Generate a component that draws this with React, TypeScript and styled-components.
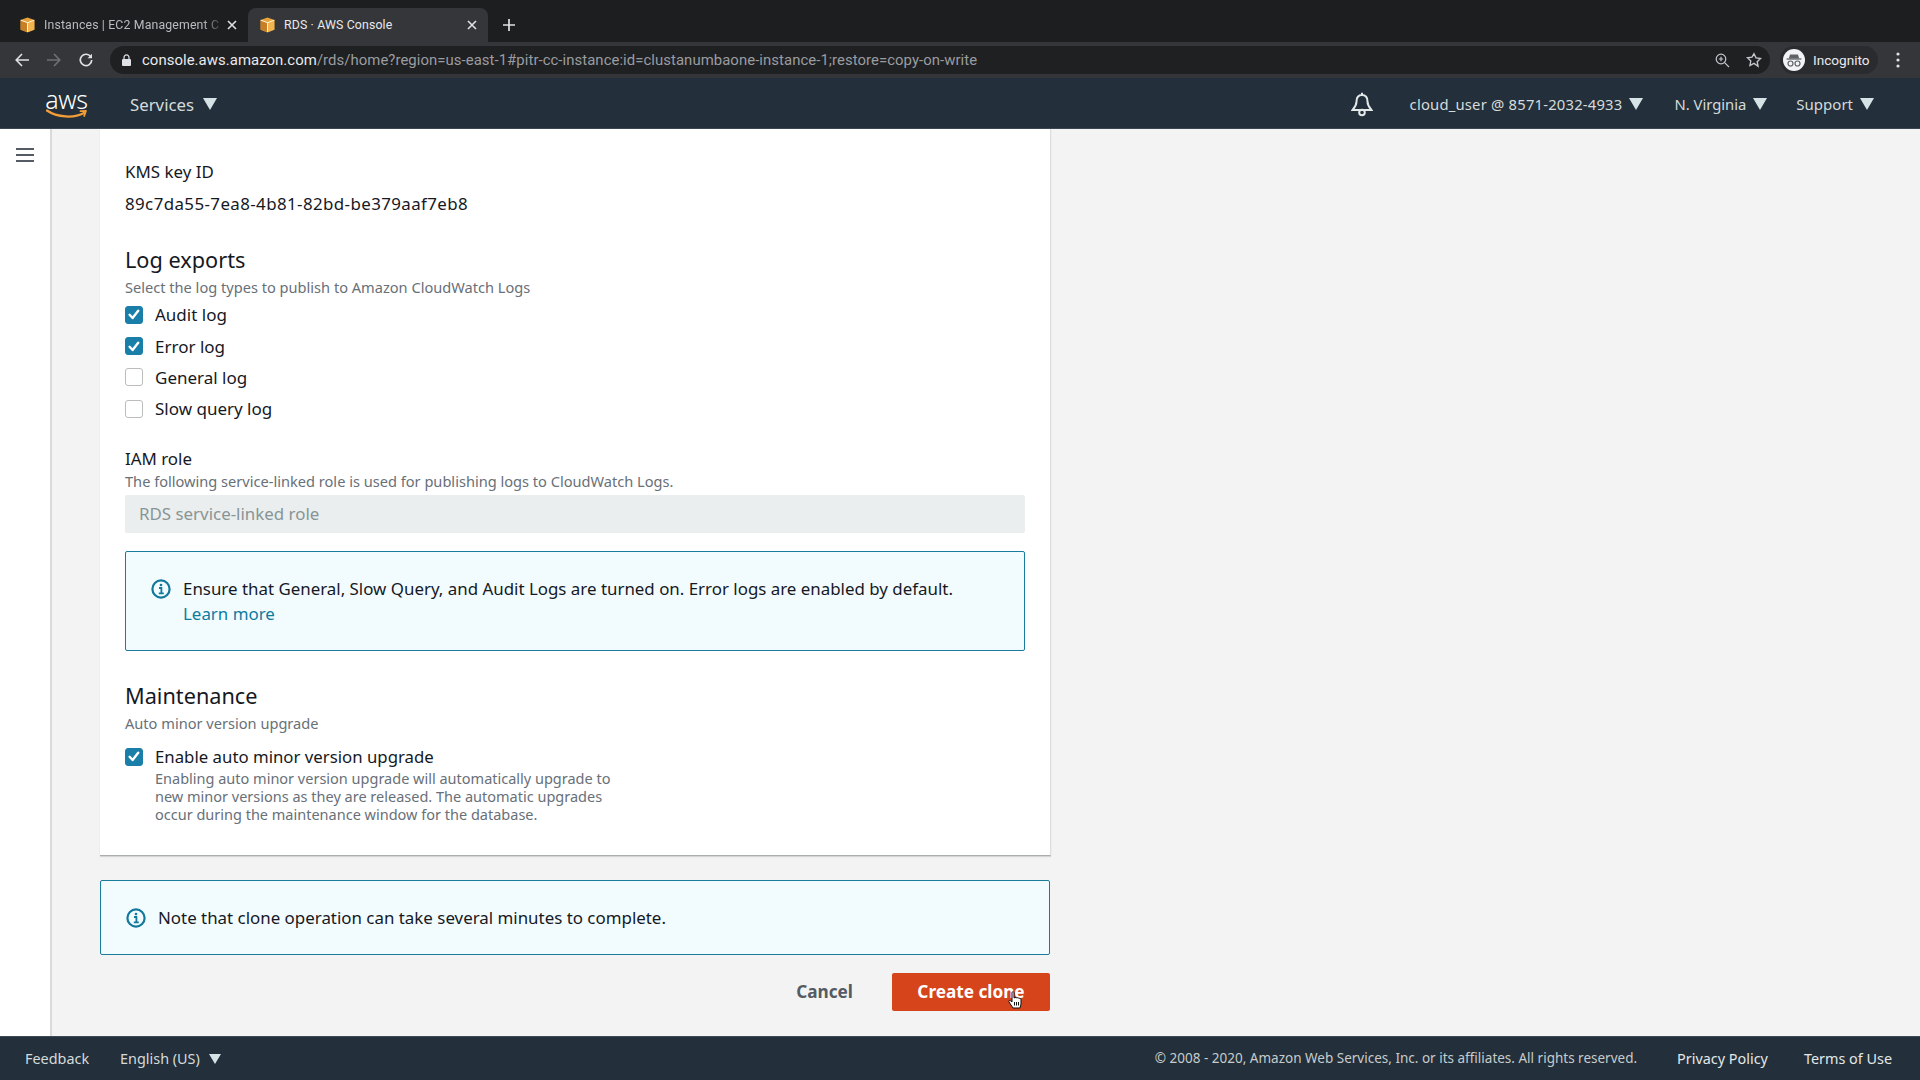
import React from "react";
import styled, { createGlobalStyle } from "styled-components";

const Global = createGlobalStyle`
  html, body { margin: 0; padding: 0; height: 100%; background: #f3f3f3; }
  * { box-sizing: border-box; }
  body { font-family: "Noto Sans", "Open Sans", sans-serif; color: #16191f; overflow: hidden; }
`;

const Page = styled.div`
  display: flex; flex-direction: column; width: 1920px; height: 1080px; overflow: hidden;
`;
const TabStrip = styled.div`
  display: flex; align-items: flex-end; height: 42px; background: #1d1e20; padding-left: 8px; flex: none;
`;
const Tab = styled.div<{ $active?: boolean }>`
  display: flex; align-items: center; width: 240px; height: 34px; padding: 0 9px 0 12px;
  border-radius: 8px 8px 0 0; background: ${(p) => (p.$active ? "#35363a" : "transparent")};
  color: ${(p) => (p.$active ? "#e8eaed" : "#b9bcc0")};
  font: 12.3px "Roboto", sans-serif; letter-spacing: .15px;
`;
const TabTitle = styled.span`
  flex: 1; margin-left: 9px; white-space: nowrap;
`;
const FadedTitle = styled(TabTitle)`
  -webkit-mask-image: linear-gradient(90deg, #000 88%, transparent 100%);
  mask-image: linear-gradient(90deg, #000 88%, transparent 100%);
`;
const TabClose = styled.span`
  display: flex; flex: none; width: 14px; justify-content: center; color: #dfe1e5;
`;
const NewTab = styled.div`
  display: flex; align-self: center; margin: 8px 0 0 15px; color: #dfe1e5;
`;
const Toolbar = styled.div`
  display: flex; align-items: center; height: 36px; background: #35363a; flex: none; padding: 0 0 0 15px;
`;
const ToolIcon = styled.span<{ $dim?: boolean }>`
  display: flex; width: 18px; margin-right: 14px; color: ${(p) => (p.$dim ? "#6e7074" : "#dfe1e5")};
`;
const UrlPill = styled.div`
  display: flex; align-items: center; width: 1660px; height: 28px; margin-left: -1px; padding: 0 8px 0 12px;
  border-radius: 14px; background: #1f2022; font: 14.9px "Roboto", sans-serif; color: #9a9ca0;
`;
const UrlText = styled.span`
  flex: 1; margin-left: 11px; white-space: nowrap; letter-spacing: .06px;
  b { font-weight: 400; color: #e8eaed; }
`;
const PillIcon = styled.span`
  display: flex; margin-left: 16px; color: #c4c7cb;
`;
const IncognitoPill = styled.div`
  display: flex; align-items: center; width: 98px; height: 28px; margin-left: 10px; padding-left: 3px; gap: 8px;
  border-radius: 14px; background: #2a2b2e; font: 13.6px "Roboto", sans-serif; color: #e8eaed;
`;
const Dots = styled.span`
  display: flex; margin-left: 18px; color: #dfe1e5;
`;
const Nav = styled.header`
  display: flex; align-items: center; height: 51px; flex: none; background: #232f3a; padding: 2px 46px 0 46px;
  color: #d5dbdb; border-bottom: 1px solid #3b4550;
`;
const Logo = styled.div`
  display: flex; flex-direction: column; align-items: center; width: 41px; margin-right: 43px; color: #fff;
`;
const LogoWord = styled.span`
  font: 300 25px/19px "Noto Sans", sans-serif; letter-spacing: -.4px; height: 19px;
`;
const NavItem = styled.div`
  display: flex; align-items: center; gap: 7px; font-size: 14.8px; white-space: nowrap; color: #d5dbdb;
`;
const ServicesItem = styled(NavItem)`
  font-size: 16.8px; gap: 9px;
`;
const UserItem = styled(NavItem)`
  letter-spacing: .2px; margin-right: 2px;
`;
const SupportItem = styled(NavItem)`
  font-size: 15px;
`;
const NavSpacer = styled.div`flex: 1;`;
const Bell = styled.span`
  display: flex; margin-right: 37px; color: #e3e8e8;
`;
const NavRight = styled.div`
  display: flex; align-items: center; gap: 29px;
`;
const Caret = styled.span`
  display: inline-block; width: 0; height: 0; flex: none;
  border-left: 7px solid transparent; border-right: 7px solid transparent; border-top: 12px solid #d5e3e6;
`;
const Body = styled.div`
  display: flex; flex: 1; min-height: 0;
`;
const SideNav = styled.aside`
  width: 52px; flex: none; background: #fff; border-right: 2px solid #d8dbdb; padding: 17px 0 0 16px; color: #545b64;
`;
const Main = styled.main`
  flex: 1; padding-left: 48px;
`;
const Card = styled.section`
  width: 951px; background: #fff; padding: 31px 25px 32px; border-right: 1px solid #dcdede;
  border-bottom: 1px solid #a9adad; box-shadow: 0 1px 1px rgba(0,0,0,.12);
`;
const FieldLabel = styled.div`
  font-size: 16.9px; line-height: 24px;
`;
const FieldValue = styled.div`
  font-size: 16.9px; line-height: 24px; margin-top: 8px; letter-spacing: .4px;
`;
const Heading = styled.h2<{ $top: number }>`
  margin: ${(p) => p.$top}px 0 0; font-size: 21.7px; font-weight: 400; line-height: 30px;
`;
const Hint = styled.div`
  margin-top: 2px; font-size: 14.6px; line-height: 20px; color: #687078;
`;
const HintTight = styled(Hint)`margin-top: 0;`;
const CheckList = styled.div`
  margin-top: 2px;
`;
const CheckRow = styled.label`
  display: flex; align-items: center; height: 31.4px; gap: 12px; font-size: 17px;
`;
const Box = styled.span<{ $on?: boolean }>`
  display: flex; align-items: center; justify-content: center; width: 18px; height: 18px; flex: none; border-radius: 3px;
  background: ${(p) => (p.$on ? "#1a7fa8" : "#fff")};
  border: 1px solid ${(p) => (p.$on ? "#1a7fa8" : "#b9bdbd")};
`;
const SubField = styled.div`
  margin-top: 22px;
`;
const FakeInput = styled.div`
  display: flex; align-items: center; height: 38px; margin-top: 4px; padding-left: 14px; background: #ebeeee;
  border-radius: 2px; color: #879596; font-size: 16.9px;
`;
const InfoBox = styled.div<{ $tall?: boolean }>`
  display: flex; gap: 12px; border: 1px solid #1b7b9b; border-radius: 2px; background: #f2fcff;
  ${(p) => p.$tall
    ? "height: 100px; margin-top: 18px; padding: 24px 25px;"
    : "height: 75px; margin-top: 24px; padding: 0 25px; align-items: center; width: 950px;"}
`;
const InfoIcon = styled.span`
  display: flex; flex: none; color: #12799c; height: 25px; align-items: center; margin-top: 1px;
`;
const InfoText = styled.div`
  font-size: 16.9px; line-height: 25px;
`;
const LinkText = styled.a`
  color: #0d7b9e; display: block;
`;
const EnableRow = styled.div`
  display: flex; gap: 12px; margin-top: 12px;
`;
const EnableBox = styled(Box)`margin-top: 3px;`;
const EnableLabel = styled.div`
  font-size: 16.8px; line-height: 24px;
`;
const EnableHint = styled.div`
  font-size: 14.5px; line-height: 18px; color: #687078; width: 480px;
`;
const Actions = styled.div`
  display: flex; align-items: center; justify-content: flex-end; gap: 39px; width: 950px; height: 38px; margin-top: 18px;
`;
const Cancel = styled.button`
  border: 0; background: none; padding: 0; font: 700 17.2px "Noto Sans", sans-serif; color: #545b64;
`;
const Primary = styled.button`
  position: relative; width: 158px; height: 38px; border: 0; border-radius: 2px; background: #d6441c; color: #fff;
  font: 700 17.2px "Noto Sans", sans-serif; padding: 0;
`;
const Pointer = styled.span`
  position: absolute; left: 116px; top: 18px; display: flex;
`;
const Footer = styled.footer`
  display: flex; align-items: center; height: 44px; flex: none; background: #232f3a; padding: 0 28px 0 25px;
  color: #d5dbdb; font-size: 14.4px; border-top: 1px solid #3f4953;
`;
const FootLang = styled.span`
  display: flex; align-items: center; gap: 9px; margin-left: 31px;
`;
const SmallCaret = styled(Caret)`
  border-left-width: 6px; border-right-width: 6px; border-top-width: 10px;
`;
const Copy = styled.span`
  margin-left: auto; font-size: 13.5px; color: #c6cccc; margin-top: -2px;
`;
const FootLink = styled.span<{ $gap: number }>`
  margin-left: ${(p) => p.$gap}px; color: #e3e8e8;
`;

const Cube = () => (
  <svg width="15" height="16" viewBox="0 0 15 16">
    <path d="M7.5 0.5 14.5 3v9.8L7.5 15.5.5 12.8V3z" fill="#e8a33d" />
    <path d="M.8 3.4 7 5.8V15L.8 12.6z" fill="#c97d24" />
    <path d="M14.2 3.4 8 5.8V15l6.2-2.4z" fill="#f0b54e" />
    <path d="M.8 3.2 7.5 5.7l6.7-2.5" fill="none" stroke="#fff2d6" strokeWidth="1" />
    <path d="M7.5 5.7V15" fill="none" stroke="#fff2d6" strokeWidth="1" />
  </svg>
);
const X = () => (
  <svg width="10" height="10" viewBox="0 0 10 10" fill="none" stroke="currentColor" strokeWidth="1.6">
    <path d="M1 1l8 8M9 1l-8 8" />
  </svg>
);
const Check = () => (
  <svg width="12" height="11" viewBox="0 0 12 11" fill="none" stroke="#fff" strokeWidth="2.4" strokeLinecap="round" strokeLinejoin="round">
    <path d="M1.6 5.8 4.6 9 10.2 1.8" />
  </svg>
);
const Info = () => (
  <svg width="20" height="20" viewBox="0 0 20 20" fill="none">
    <circle cx="10" cy="10" r="8.6" stroke="currentColor" strokeWidth="2.2" />
    <circle cx="10" cy="6" r="1.3" fill="currentColor" />
    <path d="M8 9h2.4v5.2M7.8 14.4h5" stroke="currentColor" strokeWidth="1.8" />
  </svg>
);
const Chk = ({ on, children }: { on?: boolean; children: React.ReactNode }) => (
  <CheckRow>
    <Box $on={on}>{on && <Check />}</Box>
    {children}
  </CheckRow>
);

export default function App() {
  return (
    <Page>
      <Global />
      <TabStrip>
        <Tab>
          <Cube />
          <FadedTitle>Instances | EC2 Management C</FadedTitle>
          <TabClose><X /></TabClose>
        </Tab>
        <Tab $active>
          <Cube />
          <TabTitle>RDS · AWS Console</TabTitle>
          <TabClose><X /></TabClose>
        </Tab>
        <NewTab>
          <svg width="12" height="12" viewBox="0 0 12 12" stroke="currentColor" strokeWidth="1.7"><path d="M6 0v12M0 6h12" /></svg>
        </NewTab>
      </TabStrip>
      <Toolbar>
        <ToolIcon>
          <svg width="14" height="14" viewBox="0 0 14 14" fill="none" stroke="currentColor" strokeWidth="1.6"><path d="M14 7H1.5M7 1 1.2 7 7 13" /></svg>
        </ToolIcon>
        <ToolIcon $dim>
          <svg width="14" height="14" viewBox="0 0 14 14" fill="none" stroke="currentColor" strokeWidth="1.6"><path d="M0 7h12.5M7 1l5.8 6L7 13" /></svg>
        </ToolIcon>
        <ToolIcon>
          <svg width="14" height="14" viewBox="0 0 14 14" fill="none" stroke="currentColor" strokeWidth="1.7"><path d="M12 4.2A5.7 5.7 0 1 0 12.7 7" /><path d="M13 .8v4.4H8.6" fill="currentColor" stroke="none" /></svg>
        </ToolIcon>
        <UrlPill>
          <svg width="9" height="12" viewBox="0 0 9 12" fill="#dfe1e5"><rect y="5" width="9" height="7" rx="1" /><path d="M2 5V3.4a2.5 2.5 0 0 1 5 0V5" fill="none" stroke="#dfe1e5" strokeWidth="1.2" /></svg>
          <UrlText><b>console.aws.amazon.com</b>/rds/home?region=us-east-1#pitr-cc-instance:id=clustanumbaone-instance-1;restore=copy-on-write</UrlText>
          <PillIcon>
            <svg width="15" height="15" viewBox="0 0 15 15" fill="none" stroke="currentColor" strokeWidth="1.2"><circle cx="6" cy="6" r="4.8" /><path d="M9.6 9.6 14 14M6 3.8v4.4M3.8 6h4.4" /></svg>
          </PillIcon>
          <PillIcon>
            <svg width="16" height="16" viewBox="0 0 24 24" fill="none" stroke="currentColor" strokeWidth="2"><path d="m12 2.5 3 6.3 6.8.9-5 4.8 1.3 6.9L12 17.1l-6.1 3.3 1.3-6.9-5-4.8 6.8-.9z" /></svg>
          </PillIcon>
        </UrlPill>
        <IncognitoPill>
          <svg width="22" height="22" viewBox="0 0 22 22">
            <circle cx="11" cy="11" r="11" fill="#f1f3f4" />
            <path d="M7 5.5h8l1.2 4H5.800z" fill="#5f6368" />
            <path d="M3.600 10h14.800" stroke="#5f6368" strokeWidth="1.3" />
            <circle cx="7.500" cy="14.500" r="2.500" fill="none" stroke="#5f6368" strokeWidth="1.200" />
            <circle cx="14.500" cy="14.500" r="2.500" fill="none" stroke="#5f6368" strokeWidth="1.200" />
          </svg>
          Incognito
        </IncognitoPill>
        <Dots>
          <svg width="4" height="16" viewBox="0 0 4 16" fill="currentColor"><circle cx="2" cy="2" r="1.6" /><circle cx="2" cy="8" r="1.6" /><circle cx="2" cy="14" r="1.6" /></svg>
        </Dots>
      </Toolbar>
      <Nav>
        <Logo>
          <LogoWord>aws</LogoWord>
          <svg width="41" height="10" viewBox="0 0 41 10" fill="none">
            <path d="M1 1.500C11 8.500 28 9.500 38 4" stroke="#f29d38" strokeWidth="2.300" strokeLinecap="round" />
            <path d="M34.500 2.200 40 1.800 38.200 7" stroke="#f29d38" strokeWidth="1.800" strokeLinecap="round" strokeLinejoin="round" />
          </svg>
        </Logo>
        <ServicesItem>Services <Caret /></ServicesItem>
        <NavSpacer />
        <Bell>
          <svg width="22" height="25" viewBox="0 0 22 25" fill="none" stroke="currentColor" strokeWidth="2"><path d="M11 3c-4 0-5.500 3-5.500 6.500 0 4-2 6-4 8.500h19c-2-2.500-4-4.500-4-8.500C16.500 6 15 3 11 3zM11 .8V3" /><circle cx="11" cy="20.500" r="2.800" /></svg>
        </Bell>
        <NavRight>
          <UserItem>cloud_user @ 8571-2032-4933 <Caret /></UserItem>
          <NavItem>N. Virginia <Caret /></NavItem>
          <SupportItem>Support <Caret /></SupportItem>
        </NavRight>
      </Nav>
      <Body>
        <SideNav>
          <svg width="18" height="16" viewBox="0 0 18 16" stroke="currentColor" strokeWidth="2.200"><path d="M0 2h18M0 8h18M0 14h18" /></svg>
        </SideNav>
        <Main>
          <Card>
            <FieldLabel>KMS key ID</FieldLabel>
            <FieldValue>89c7da55-7ea8-4b81-82bd-be379aaf7eb8</FieldValue>
            <Heading $top={29}>Log exports</Heading>
            <Hint>Select the log types to publish to Amazon CloudWatch Logs</Hint>
            <CheckList>
              <Chk on>Audit log</Chk>
              <Chk on>Error log</Chk>
              <Chk>General log</Chk>
              <Chk>Slow query log</Chk>
            </CheckList>
            <SubField>
              <FieldLabel>IAM role</FieldLabel>
              <HintTight>The following service-linked role is used for publishing logs to CloudWatch Logs.</HintTight>
              <FakeInput>RDS service-linked role</FakeInput>
            </SubField>
            <InfoBox $tall>
              <InfoIcon><Info /></InfoIcon>
              <InfoText>
                Ensure that General, Slow Query, and Audit Logs are turned on. Error logs are enabled by default.
                <LinkText>Learn more</LinkText>
              </InfoText>
            </InfoBox>
            <Heading $top={30}>Maintenance</Heading>
            <Hint>Auto minor version upgrade</Hint>
            <EnableRow>
              <EnableBox $on><Check /></EnableBox>
              <div>
                <EnableLabel>Enable auto minor version upgrade</EnableLabel>
                <EnableHint>
                  Enabling auto minor version upgrade will automatically upgrade to new minor versions as they are released. The automatic upgrades occur during the maintenance window for the database.
                </EnableHint>
              </div>
            </EnableRow>
          </Card>
          <InfoBox>
            <InfoIcon><Info /></InfoIcon>
            <InfoText>Note that clone operation can take several minutes to complete.</InfoText>
          </InfoBox>
          <Actions>
            <Cancel>Cancel</Cancel>
            <Primary>
              Create clone
              <Pointer>
                <svg width="14" height="18" viewBox="0 0 14 18">
                  <path d="M4 1.500c0-1 2-1 2 0V7l1-.5c.8-.3 1.400 0 1.500.5l1-.3c.8-.2 1.300.2 1.400.7l.8-.1c.8 0 1.300.6 1.300 1.400v4.300L12 17H5L1 11c-.7-1.200.6-2.200 1.600-1.200L4 11z" fill="#fff" stroke="#111" strokeWidth="1" />
                  <path d="M6.500 11v3.500M8.500 11v3.500M10.500 11v3.500" stroke="#111" strokeWidth="1" />
                </svg>
              </Pointer>
            </Primary>
          </Actions>
        </Main>
      </Body>
      <Footer>
        <span>Feedback</span>
        <FootLang>English (US) <SmallCaret /></FootLang>
        <Copy>© 2008 - 2020, Amazon Web Services, Inc. or its affiliates. All rights reserved.</Copy>
        <FootLink $gap={40}>Privacy Policy</FootLink>
        <FootLink $gap={36}>Terms of Use</FootLink>
      </Footer>
    </Page>
  );
}
